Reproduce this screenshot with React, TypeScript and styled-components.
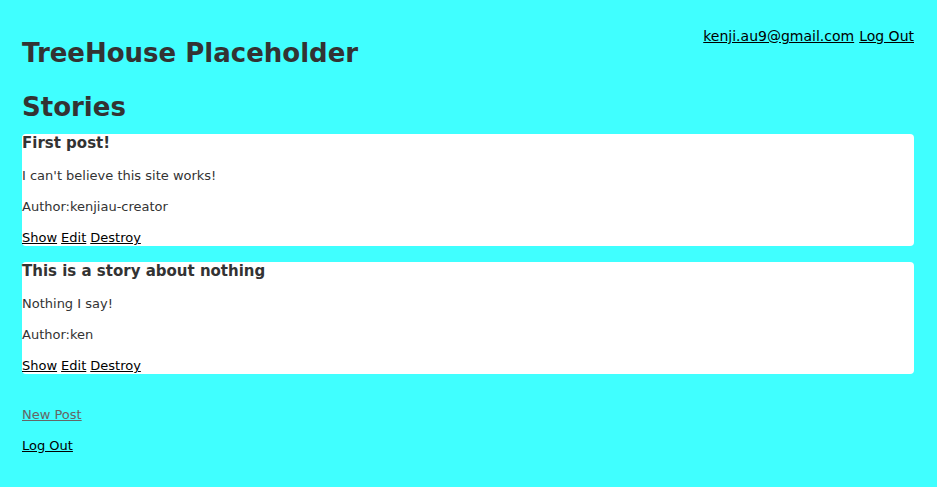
import React from "react";
import styled, { createGlobalStyle } from "styled-components";

const Global = createGlobalStyle`
  html, body { margin: 0; padding: 0; background: #40ffff; }
  body { font-family: "DejaVu Sans", Verdana, sans-serif; color: #333; font-size: 13px; }
`;

const Page = styled.div`
  padding: 22px 23px 20px 22px;
`;

const Header = styled.header`
  display: flex;
  justify-content: space-between;
  align-items: flex-start;
`;

const Title = styled.h1`
  margin: 15px 0 0;
  font-size: 26px;
  line-height: 32px;
  font-weight: bold;
  color: #333;
`;

const UserNav = styled.nav`
  display: flex;
  gap: 5px;
  font-size: 14px;
  line-height: 18px;
  margin-top: 5px;
`;

const NavLink = styled.a<{ $muted?: boolean }>`
  color: ${(p) => (p.$muted ? "#666" : "#000")};
  text-decoration: underline;
  cursor: pointer;
`;

const Section = styled.h1`
  margin: 22px 0 11px;
  font-size: 26px;
  line-height: 32px;
  font-weight: bold;
  color: #333;
`;

const List = styled.div`
  display: flex;
  flex-direction: column;
  gap: 16px;
`;

const Card = styled.article`
  background: #fff;
  border-radius: 4px;
  height: 112px;
  display: flex;
  flex-direction: column;
`;

const CardTitle = styled.h3`
  margin: 0;
  font-size: 15px;
  line-height: 19px;
  font-weight: bold;
  color: #333;
`;

const Para = styled.p`
  margin: 14px 0 0;
  line-height: 18px;

  & + & {
    margin-top: 13px;
  }
`;

const Actions = styled.div`
  margin-top: auto;
  display: flex;
  gap: 4px;
  line-height: 17px;
`;

const Footer = styled.div`
  margin-top: 32px;
  display: flex;
  flex-direction: column;
  align-items: flex-start;
  gap: 13px;
  line-height: 18px;
`;

const stories = [
  { title: "First post!", body: "I can't believe this site works!", author: "kenjiau-creator" },
  { title: "This is a story about nothing", body: "Nothing I say!", author: "ken" },
];

export default function App() {
  return (
    <>
      <Global />
      <Page>
        <Header>
          <Title>TreeHouse Placeholder</Title>
          <UserNav>
            <NavLink>kenji.au9@gmail.com</NavLink>
            <NavLink>Log Out</NavLink>
          </UserNav>
        </Header>
        <Section>Stories</Section>
        <List>
          {stories.map((s) => (
            <Card key={s.title}>
              <CardTitle>{s.title}</CardTitle>
              <Para>{s.body}</Para>
              <Para>Author:{s.author}</Para>
              <Actions>
                <NavLink>Show</NavLink>
                <NavLink>Edit</NavLink>
                <NavLink>Destroy</NavLink>
              </Actions>
            </Card>
          ))}
        </List>
        <Footer>
          <NavLink $muted>New Post</NavLink>
          <NavLink>Log Out</NavLink>
        </Footer>
      </Page>
    </>
  );
}
